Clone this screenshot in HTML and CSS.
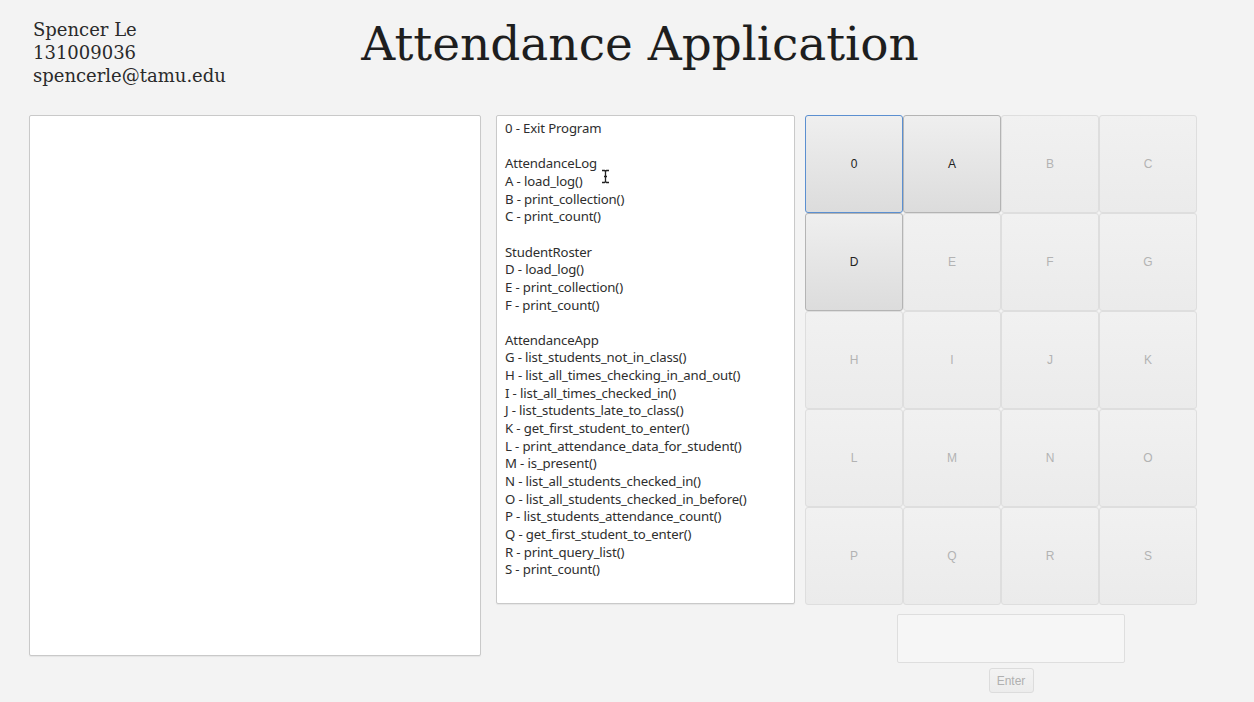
FILE: index.html
```html
<!DOCTYPE html>
<html lang="en">
<head>
<meta charset="utf-8">
<title>Attendance Application</title>
<link rel="stylesheet" href="styles.css">
</head>
<body>
<div class="window">
  <header class="header">
    <div class="info">
      <div>Spencer Le</div>
      <div>131009036</div>
      <div>spencerle@tamu.edu</div>
    </div>
    <h1 class="title">Attendance Application</h1>
  </header>
  <main class="main">
    <div class="output panel"></div>
    <div class="menu panel">
      <div class="line">0 - Exit Program</div>
      <div class="line blank"></div>
      <div class="line">AttendanceLog</div>
      <div class="line">A - load_log()</div>
      <div class="line">B - print_collection()</div>
      <div class="line">C - print_count()</div>
      <div class="line blank"></div>
      <div class="line">StudentRoster</div>
      <div class="line">D - load_log()</div>
      <div class="line">E - print_collection()</div>
      <div class="line">F - print_count()</div>
      <div class="line blank"></div>
      <div class="line">AttendanceApp</div>
      <div class="line">G - list_students_not_in_class()</div>
      <div class="line">H - list_all_times_checking_in_and_out()</div>
      <div class="line">I - list_all_times_checked_in()</div>
      <div class="line">J - list_students_late_to_class()</div>
      <div class="line">K - get_first_student_to_enter()</div>
      <div class="line">L - print_attendance_data_for_student()</div>
      <div class="line">M - is_present()</div>
      <div class="line">N - list_all_students_checked_in()</div>
      <div class="line">O - list_all_students_checked_in_before()</div>
      <div class="line">P - list_students_attendance_count()</div>
      <div class="line">Q - get_first_student_to_enter()</div>
      <div class="line">R - print_query_list()</div>
      <div class="line">S - print_count()</div>
      <svg class="ibeam" width="9" height="15" viewBox="0 0 9 15"><path d="M1 1.5h2.5l1 1 1-1H8M4.5 2.5v10M1 13.5h2.5l1-1 1 1H8M3 7.5h3" fill="none" stroke="#222" stroke-width="1.3"/></svg>
    </div>
    <div class="controls">
      <div class="keys">
        <button class="key focus">0</button>
        <button class="key on">A</button>
        <button class="key off">B</button>
        <button class="key off">C</button>
        <button class="key on">D</button>
        <button class="key off">E</button>
        <button class="key off">F</button>
        <button class="key off">G</button>
        <button class="key off">H</button>
        <button class="key off">I</button>
        <button class="key off">J</button>
        <button class="key off">K</button>
        <button class="key off">L</button>
        <button class="key off">M</button>
        <button class="key off">N</button>
        <button class="key off">O</button>
        <button class="key off">P</button>
        <button class="key off">Q</button>
        <button class="key off">R</button>
        <button class="key off">S</button>
      </div>
      <div class="entry">
        <div class="field"></div>
        <button class="enter">Enter</button>
      </div>
    </div>
  </main>
</div>
</body>
</html>
```

FILE: styles.css
```css
html, body {
  margin: 0;
  padding: 0;
  background: #f3f3f3;
}

.window {
  width: 1254px;
  height: 702px;
  overflow: hidden;
  background: #f3f3f3;
}

.header {
  position: relative;
  height: 115px;
}

.info {
  padding: 18px 0 0 33px;
  font-family: "DejaVu Serif", "Liberation Serif", serif;
  font-size: 18px;
  line-height: 23px;
  color: #2a2a2a;
}

.title {
  position: absolute;
  left: 0;
  right: 0;
  top: 14px;
  margin: 0;
  padding-left: 26px;
  text-align: center;
  font-family: "DejaVu Serif", "Liberation Serif", serif;
  font-weight: normal;
  font-size: 47px;
  line-height: 60px;
  color: #1e1e1e;
}

.main {
  display: flex;
  align-items: flex-start;
  padding-left: 29px;
}

.panel {
  background: #fff;
  border: 1px solid #c9c9c9;
  border-radius: 2px;
  box-sizing: border-box;
  box-shadow: 0 1px 1px rgba(0,0,0,0.06);
}

.output {
  width: 452px;
  height: 541px;
}

.menu {
  position: relative;
  margin-left: 15px;
  width: 299px;
  height: 489px;
  padding: 4px 0 0 8px;
  font-family: "Noto Sans", "Open Sans", sans-serif;
  font-size: 13.2px;
  letter-spacing: -0.15px;
  line-height: 17.65px;
  color: #2e2e2e;
}

.line.blank {
  height: 17.65px;
}

.ibeam {
  position: absolute;
  left: 104px;
  top: 53px;
}

.controls {
  margin-left: 10px;
  display: flex;
  flex-direction: column;
}

.keys {
  display: grid;
  grid-template-columns: repeat(4, 98px);
  grid-auto-rows: 98px;
  gap: 0;
}

.key {
  margin: 0;
  padding: 0;
  border-radius: 3px;
  font-family: "Liberation Sans", Arial, sans-serif;
  font-size: 12px;
  box-sizing: border-box;
}

.key.on, .key.focus {
  background: linear-gradient(#efefef, #dcdcdc);
  border: 1px solid #b4b4b4;
  color: #222;
}

.key.focus {
  border-color: #5b8fd0;
}

.key.off {
  background: linear-gradient(#f1f1f1, #ebebeb);
  border: 1px solid #dedede;
  color: #b3b3b3;
}

.entry {
  display: flex;
  flex-direction: column;
  align-items: center;
  padding-left: 20px;
}

.field {
  margin-top: 9px;
  width: 228px;
  height: 49px;
  box-sizing: border-box;
  background: #f6f6f6;
  border: 1px solid #dedede;
  border-radius: 2px;
}

.enter {
  margin-top: 5px;
  width: 45px;
  height: 25px;
  padding: 0;
  box-sizing: border-box;
  background: linear-gradient(#f3f3f3, #ececec);
  border: 1px solid #dcdcdc;
  border-radius: 3px;
  font-family: "Liberation Sans", Arial, sans-serif;
  font-size: 12px;
  color: #b0b0b0;
}
```
